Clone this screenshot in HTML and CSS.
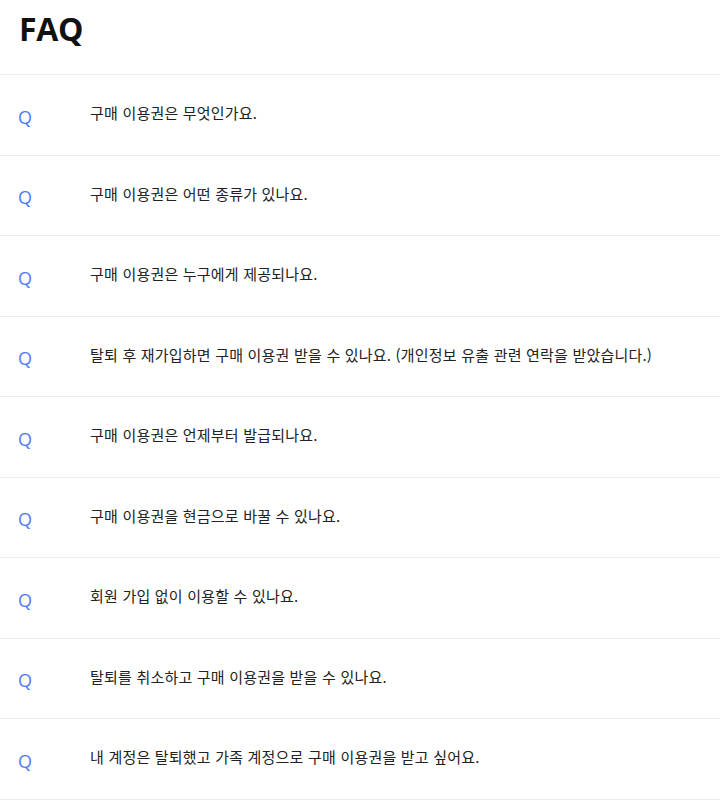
FILE: index.html
```html
<!DOCTYPE html>
<html lang="ko">
<head>
<meta charset="utf-8">
<title>FAQ</title>
<link rel="stylesheet" href="styles.css">
</head>
<body>
<div class="page">
  <header class="head"><h1 class="title">FAQ</h1></header>
  <ul class="faq">
    <li class="row"><span class="q">Q</span><span class="text">구매 이용권은 무엇인가요.</span></li>
    <li class="row"><span class="q">Q</span><span class="text">구매 이용권은 어떤 종류가 있나요.</span></li>
    <li class="row"><span class="q">Q</span><span class="text">구매 이용권은 누구에게 제공되나요.</span></li>
    <li class="row"><span class="q">Q</span><span class="text">탈퇴 후 재가입하면 구매 이용권 받을 수 있나요. (개인정보 유출 관련 연락을 받았습니다.)</span></li>
    <li class="row"><span class="q">Q</span><span class="text">구매 이용권은 언제부터 발급되나요.</span></li>
    <li class="row"><span class="q">Q</span><span class="text">구매 이용권을 현금으로 바꿀 수 있나요.</span></li>
    <li class="row"><span class="q">Q</span><span class="text">회원 가입 없이 이용할 수 있나요.</span></li>
    <li class="row"><span class="q">Q</span><span class="text">탈퇴를 취소하고 구매 이용권을 받을 수 있나요.</span></li>
    <li class="row"><span class="q">Q</span><span class="text">내 계정은 탈퇴했고 가족 계정으로 구매 이용권을 받고 싶어요.</span></li>
  </ul>
</div>
</body>
</html>
```

FILE: styles.css
```css
html, body {
  margin: 0;
  padding: 0;
  background: #fff;
}
body {
  font-family: "Noto Sans", "Noto Sans CJK KR", sans-serif;
  color: #222;
}
.head {
  height: 74px;
  box-sizing: border-box;
  padding: 8px 19px 0;
}
.title {
  margin: 0;
  font-family: "Open Sans", "Noto Sans", sans-serif;
  font-size: 32px;
  font-weight: 700;
  line-height: 42px;
  color: #111;
  letter-spacing: -0.3px;
}
.faq {
  list-style: none;
  margin: 0;
  padding: 0;
  border-bottom: 1px solid #ececec;
}
.row {
  display: flex;
  align-items: center;
  height: 80.5px;
  box-sizing: border-box;
  border-top: 1px solid #ececec;
}
.q {
  width: 90px;
  padding-left: 18px;
  box-sizing: border-box;
  flex: none;
  margin-top: 4px;
  font-family: "Open Sans", "Noto Sans", sans-serif;
  font-size: 18px;
  color: #4d7cf6;
}
.text {
  margin-bottom: 4px;
  font-family: "Noto Sans CJK KR", sans-serif;
  font-size: 15px;
  letter-spacing: 0.2px;
  color: #222;
}
```
